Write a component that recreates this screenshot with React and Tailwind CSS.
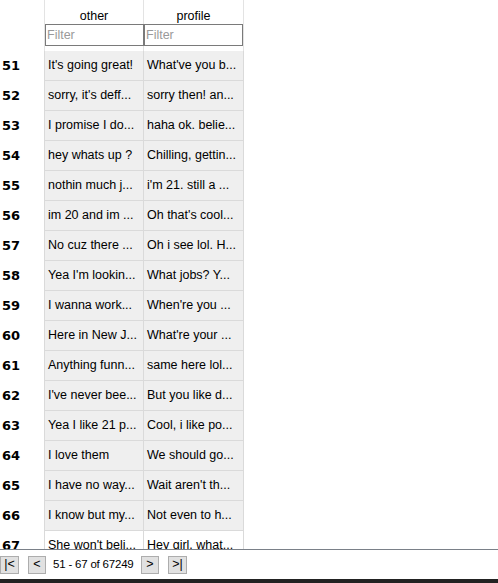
const rows = [
  [51, "It's going great!", "What've you b..."],
  [52, "sorry, it's deff...", "sorry then! an..."],
  [53, "I promise I do...", "haha ok. belie..."],
  [54, "hey whats up ?", "Chilling, gettin..."],
  [55, "nothin much j...", "i'm 21. still a ..."],
  [56, "im 20 and im ...", "Oh that's cool..."],
  [57, "No cuz there ...", "Oh i see lol. H..."],
  [58, "Yea I'm lookin...", "What jobs? Y..."],
  [59, "I wanna work...", "When're you ..."],
  [60, "Here in New J...", "What're your ..."],
  [61, "Anything funn...", "same here lol..."],
  [62, "I've never bee...", "But you like d..."],
  [63, "Yea I like 21 p...", "Cool, i like po..."],
  [64, "I love them", "We should go..."],
  [65, "I have no way...", "Wait aren't th..."],
  [66, "I know but my...", "Not even to h..."],
  [67, "She won't beli...", "Hey girl, what..."],
];

const font = { fontFamily: '"Liberation Sans", Arial, sans-serif' };

export default function App() {
  return (
    <div className="h-[583px] w-[498px] flex flex-col bg-white text-[12.5px] text-black overflow-hidden" style={font}>
      <div className="flex-1 overflow-hidden">
        {/* header */}
        <div className="grid grid-cols-[44px_100px_100px]">
          <div />
          <div className="h-[23px] pt-[9px] leading-[14px] text-center border-l border-r border-[#e3e3e3]">other</div>
          <div className="h-[23px] pt-[9px] leading-[14px] text-center border-r border-[#e3e3e3]">profile</div>
          <div className="h-[28px]" />
          <div className="h-[28px] border-l border-r border-[#e3e3e3] pt-[1px]">
            <input className="w-[99px] h-[22px] border border-[#7a7a7a] px-[1px] text-[12.5px] placeholder-[#9a9a9a] outline-none" placeholder="Filter" />
          </div>
          <div className="h-[28px] border-r border-[#e3e3e3] pt-[1px]">
            <input className="w-[99px] h-[22px] border border-[#7a7a7a] px-[1px] text-[12.5px] placeholder-[#9a9a9a] outline-none" placeholder="Filter" />
          </div>
        </div>
        {/* rows */}
        <div className="grid grid-cols-[44px_100px_100px]">
          {rows.map(([n, a, b]) => {
            const bg = n === 67 ? 'bg-white' : 'bg-[#efefef]';
            return [
              <div key={n + 'n'} className="h-[30px] flex items-center pl-[2px] font-bold text-[13px]" style={{ fontFamily: '"DejaVu Sans", sans-serif' }}>{n}</div>,
              <div key={n + 'a'} className={`h-[30px] flex items-center pl-[3px] border-l border-r border-b border-[#dadada] whitespace-nowrap overflow-hidden ${bg}`}>{a}</div>,
              <div key={n + 'b'} className={`h-[30px] flex items-center pl-[3px] border-r border-b border-[#dadada] whitespace-nowrap overflow-hidden ${bg}`}>{b}</div>,
            ];
          })}
        </div>
      </div>
      <div className="h-[30px] border-t border-[#7a8088] flex items-center whitespace-nowrap">
        <button className="w-[19px] h-[18px] bg-[#e1e1e1] border border-[#adadad] flex items-center justify-center">|&lt;</button>
        <button className="ml-[9px] w-[18px] h-[18px] bg-[#e1e1e1] border border-[#adadad] flex items-center justify-center">&lt;</button>
        <span className="ml-[7px] w-[88px] text-[11.5px] tracking-[-0.2px]">51 - 67 of 67249</span>
        <button className="w-[18px] h-[18px] bg-[#e1e1e1] border border-[#adadad] flex items-center justify-center">&gt;</button>
        <button className="ml-[9px] w-[19px] h-[18px] bg-[#e1e1e1] border border-[#adadad] flex items-center justify-center">&gt;|</button>
      </div>
      <div className="h-[4px] bg-[#222222]" />
    </div>
  );
}
